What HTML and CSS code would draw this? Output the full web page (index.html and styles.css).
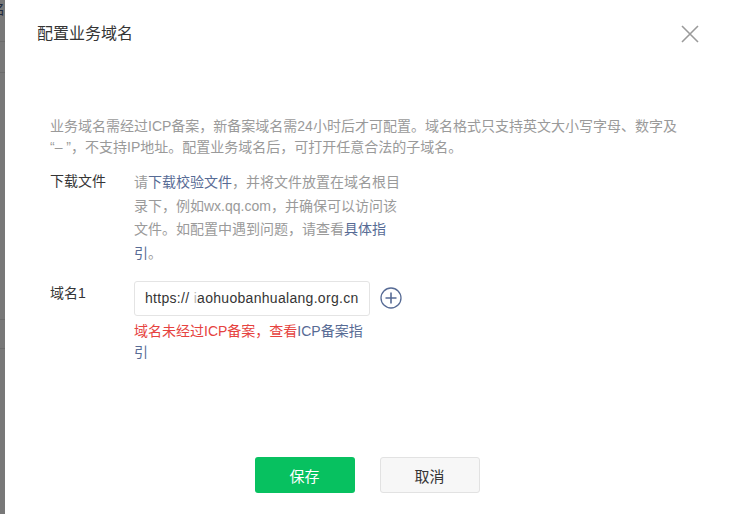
FILE: index.html
```html
<!DOCTYPE html>
<html lang="zh-CN">
<head>
<meta charset="utf-8">
<title>配置业务域名</title>
<link rel="stylesheet" href="styles.css">
</head>
<body>
<div class="page">
  <div class="backdrop"><span class="backdrop-text">名</span></div>
  <div class="dialog">
    <div class="dialog-header">
      <h1 class="dialog-title">配置业务域名</h1>
      <button class="close-btn" aria-label="关闭">
        <svg width="18" height="18" viewBox="0 0 18 18"><path d="M1 1L17 17M17 1L1 17" stroke="#9a9a9a" stroke-width="1.6" fill="none"/></svg>
      </button>
    </div>
    <div class="dialog-body">
      <p class="desc">业务域名需经过ICP备案，新备案域名需24小时后才可配置。域名格式只支持英文大小写字母、数字及“– ”，不支持IP地址。配置业务域名后，可打开任意合法的子域名。</p>
      <div class="form-row row-file">
        <div class="label">下载文件</div>
        <div class="content file-text">请<a class="link">下载校验文件</a>，并将文件放置在域名根目录下，例如wx.qq.com，并确保可以访问该文件。如配置中遇到问题，请查看<a class="link">具体指引</a>。</div>
      </div>
      <div class="form-row row-domain">
        <div class="label label-domain">域名1</div>
        <div class="content">
          <div class="input-line">
            <div class="input">https:// <span class="faded">i</span>aohuobanhualang.org.cn</div>
            <span class="add-btn">
              <svg width="22" height="22" viewBox="0 0 22 22"><circle cx="11" cy="11" r="10" stroke="#576b95" stroke-width="1.3" fill="none"/><path d="M11 5.5V16.5M5.5 11H16.5" stroke="#576b95" stroke-width="1.6"/></svg>
            </span>
          </div>
          <div class="error">域名未经过ICP备案，查看<a class="link">ICP备案指引</a></div>
        </div>
      </div>
    </div>
    <div class="dialog-footer">
      <button class="btn btn-primary">保存</button>
      <button class="btn btn-default">取消</button>
    </div>
  </div>
</div>
</body>
</html>
```

FILE: styles.css
```css
* { box-sizing: border-box; }
html, body { margin: 0; padding: 0; }
body {
  font-family: "Liberation Sans", "Noto Sans CJK SC", sans-serif;
  font-size: 14px;
  color: #353535;
  background: #fff;
}
.page {
  display: flex;
  width: 729px;
  height: 514px;
  overflow: hidden;
}
.backdrop {
  width: 5px;
  flex: none;
  background-color: #787878;
  background-image:
    linear-gradient(#6c6c6c, #6c6c6c),
    linear-gradient(#6c6c6c, #6c6c6c),
    linear-gradient(#6c6c6c, #6c6c6c),
    linear-gradient(#6c6c6c, #6c6c6c);
  background-size: 100% 1px;
  background-repeat: no-repeat;
  background-position: 0 41px, 0 72px, 0 319px, 0 348px;
  overflow: hidden;
  display: flex;
  justify-content: flex-end;
  align-items: flex-start;
}
.backdrop-text {
  flex: none;
  font-size: 14px;
  line-height: 18px;
  color: #1f2a3d;
}
.dialog {
  flex: 1;
  background: #fff;
  display: flex;
  flex-direction: column;
}
.dialog-header {
  height: 67px;
  display: flex;
  align-items: center;
  justify-content: space-between;
  padding: 0 30px 0 32px;
}
.dialog-title {
  margin: 0;
  font-size: 16px;
  font-weight: normal;
  color: #353535;
  line-height: 20px;
}
.close-btn {
  border: 0;
  background: none;
  padding: 0;
  width: 18px;
  height: 18px;
  display: block;
}
.close-btn svg { display: block; }
.dialog-body {
  padding: 49px 0 0 45px;
}
.desc {
  margin: 0;
  width: 632px;
  line-height: 21px;
  color: #9a9a9a;
}
.form-row {
  display: flex;
  align-items: flex-start;
}
.row-file { margin-top: 13px; }
.row-domain { margin-top: 15px; }
.label {
  width: 84px;
  flex: none;
  line-height: 20px;
  color: #353535;
}
.label-domain { padding-top: 2px; }
.content { width: 270px; }
.file-text {
  line-height: 23.7px;
  color: #9a9a9a;
}
.link { color: #576b95; text-decoration: none; }
.input-line {
  display: flex;
  align-items: center;
}
.input {
  width: 236px;
  height: 35px;
  border: 1px solid #e4e4e4;
  border-radius: 3px;
  padding: 0 0 0 10px;
  line-height: 33px;
  letter-spacing: 0.3px;
  color: #353535;
  white-space: nowrap;
  overflow: hidden;
}
.faded { color: #b8b8b8; }
.add-btn {
  margin-left: 10px;
  display: block;
  width: 22px;
  height: 22px;
}
.add-btn svg { display: block; }
.error {
  width: 236px;
  margin-top: 5px;
  line-height: 21px;
  color: #e64340;
}
.dialog-footer {
  margin-top: auto;
  padding-bottom: 21px;
  display: flex;
  justify-content: center;
  gap: 25px;
}
.btn {
  width: 100px;
  height: 36px;
  border-radius: 3px;
  font-family: "Liberation Sans", "Noto Sans CJK SC", sans-serif;
  font-size: 15px;
  padding: 0;
  cursor: pointer;
}
.btn-primary {
  background: #07c160;
  color: #fff;
  border: 0;
}
.btn-default {
  background: #f7f7f7;
  color: #353535;
  border: 1px solid #e2e2e2;
}
```
